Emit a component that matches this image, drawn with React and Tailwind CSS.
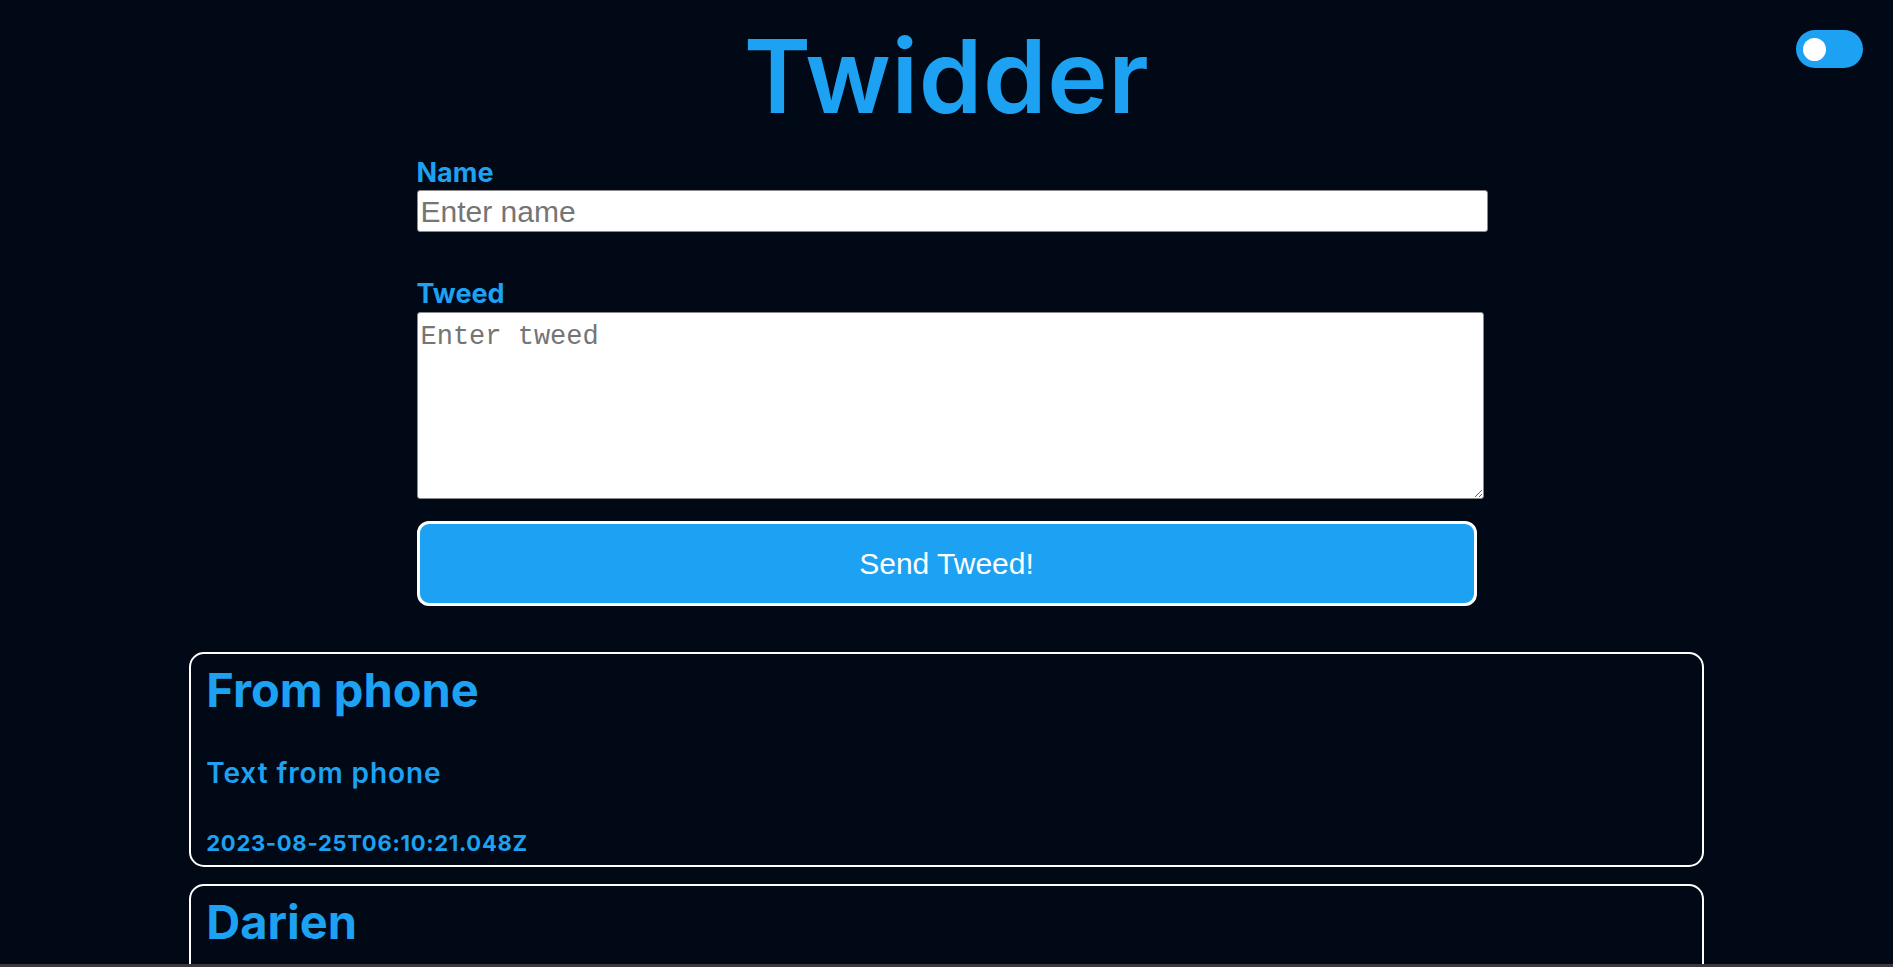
import React from "react";

const sans = { fontFamily: "Inter, 'Noto Sans', sans-serif" };

function Card({ name, text, time }) {
  return (
    <div className="border-2 border-white rounded-[15px] pl-[15px] pt-[12px] pb-[11px]" style={sans}>
      <h2 className="text-[47px] leading-none font-bold text-[#1da1f2] m-0">{name}</h2>
      <p className="text-[28px] leading-none font-semibold tracking-[0.9px] text-[#1da1f2] mt-[46px]">{text}</p>
      <p className="text-[22px] leading-none font-bold tracking-[0.7px] text-[#1da1f2] mt-[45px]">{time}</p>
    </div>
  );
}

export default function App() {
  return (
    <div className="relative h-screen overflow-hidden bg-[#000915]" style={sans}>
      <button className="absolute top-[30px] right-[30px] w-[67px] h-[38px] rounded-full bg-[#1da1f2] flex items-center pl-[7px]">
        <span className="block w-[23px] h-[23px] rounded-full bg-white" />
      </button>

      <h1 className="text-center text-[102px] leading-none font-semibold tracking-[0.6px] text-[#1da1f2] pt-[25px]">Twidder</h1>

      <form className="w-[1060px] mx-auto mt-[32px]" onSubmit={(e) => e.preventDefault()}>
        <label className="block text-[27px] leading-none font-bold text-[#1da1f2]">Name</label>
        <input
          type="text"
          placeholder="Enter name"
          className="block mt-[4px] w-[1071px] h-[42px] bg-white border border-[#8a8a8a] rounded-[3px] px-[3px] text-[30px] text-black placeholder:text-[#757575] outline-none"
          style={{ fontFamily: "'Liberation Sans', Arial, sans-serif" }}
        />
        <label className="block mt-[48px] text-[27px] leading-none font-bold text-[#1da1f2]">Tweed</label>
        <textarea
          placeholder="Enter tweed"
          className="block mt-[5px] w-[1067px] h-[187px] bg-white border border-[#8a8a8a] rounded-[3px] px-[3px] pt-[7px] pb-[2px] text-[27px] leading-[34px] text-black placeholder:text-[#757575] outline-none"
          style={{ fontFamily: "'Liberation Mono', 'DejaVu Sans Mono', monospace" }}
        />
        <button
          type="submit"
          className="block mt-[22px] w-full h-[85px] bg-[#1da1f2] border-[3px] border-white rounded-[12px] text-white text-[30px]"
          style={{ fontFamily: "'Liberation Sans', Arial, sans-serif" }}
        >
          Send Tweed!
        </button>
      </form>

      <div className="w-[80%] mx-auto mt-[46px] flex flex-col gap-[17px]">
        <Card name="From phone" text="Text from phone" time="2023-08-25T06:10:21.048Z" />
        <Card name="Darien" text="Hello there" time="2023-08-24T18:42:07.512Z" />
      </div>

      <div className="absolute left-0 right-0 bottom-0 h-[3px] bg-[#3a3a3a]" />
    </div>
  );
}
